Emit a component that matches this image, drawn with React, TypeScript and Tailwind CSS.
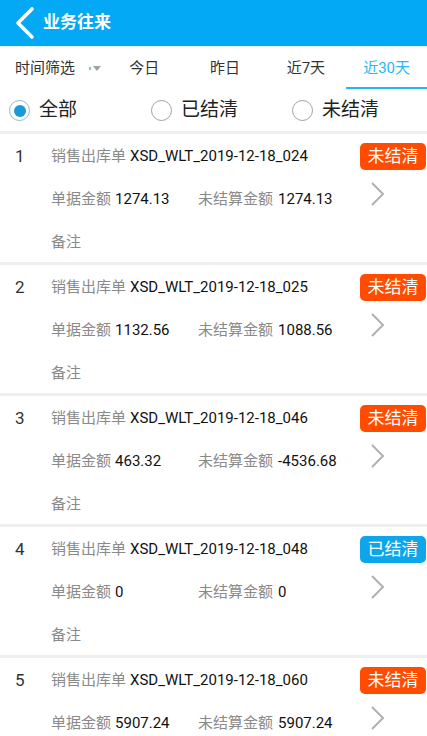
import React from "react";

const rows = [
  { n: 1, code: "XSD_WLT_2019-12-18_024", amt: "1274.13", un: "1274.13", done: false },
  { n: 2, code: "XSD_WLT_2019-12-18_025", amt: "1132.56", un: "1088.56", done: false },
  { n: 3, code: "XSD_WLT_2019-12-18_046", amt: "463.32", un: "-4536.68", done: false },
  { n: 4, code: "XSD_WLT_2019-12-18_048", amt: "0", un: "0", done: true },
  { n: 5, code: "XSD_WLT_2019-12-18_060", amt: "5907.24", un: "5907.24", done: false },
];

function Radio({ on, label }: { on?: boolean; label: string }) {
  return (
    <div className="flex items-center">
      <div
        className={
          (on ? "border-[#8fb8cc] border-[1.5px]" : "border-[#a0a0a0] border") +
          " w-[21px] h-[21px] rounded-full flex items-center justify-center bg-white"
        }
      >
        {on && <div className="w-[12px] h-[12px] rounded-full bg-[#1a9bd7]" />}
      </div>
      <span className="ml-[9px] text-[19px] text-[#222]">{label}</span>
    </div>
  );
}

export default function App() {
  return (
    <div
      className="w-[427px] h-[736px] overflow-hidden bg-white"
      style={{ fontFamily: 'Roboto, "Noto Sans CJK SC", sans-serif' }}
    >
      <div className="h-[46px] bg-[#03a9f4] flex items-center">
        <svg width="24" height="34" viewBox="0 0 24 34" className="ml-[12px]">
          <path d="M20 3 L6 17 L20 31" fill="none" stroke="white" strokeWidth="3.6" strokeLinecap="round" strokeLinejoin="round" />
        </svg>
        <span className="ml-[7px] text-white text-[17px] font-bold">业务往来</span>
      </div>
      <div className="h-[44px] flex border-t border-[#e3f3fb]">
        <div className="w-[104px] flex items-center pl-[15px] text-[15px] text-[#333]">
          <span>时间筛选</span>
          <span className="ml-[14px] w-[2px] h-[3px] bg-[#6cc9f5]" />
          <svg width="8" height="5" viewBox="0 0 8 5" className="ml-[2px]">
            <path d="M0 0 L8 0 L4 5 Z" fill="#a0a0a0" />
          </svg>
        </div>
        {["今日", "昨日", "近7天", "近30天"].map((t, i) => (
          <div key={t} className="flex-1 relative flex items-center justify-center">
            <span className={i === 3 ? "text-[15px] text-[#29b6f6]" : "text-[15px] text-[#333]"}>{t}</span>
            {i === 3 && <div className="absolute left-0 right-0 bottom-[1px] h-[2px] bg-[#29b6f6]" />}
          </div>
        ))}
      </div>
      <div className="h-[41px] flex items-center pl-[9px]">
        <div className="w-[142px]"><Radio on label="全部" /></div>
        <div className="w-[141px]"><Radio label="已结清" /></div>
        <Radio label="未结清" />
      </div>
      {rows.map((r) => (
        <div key={r.n} className="border-t-[3px] border-[#eef0f0] h-[131px] relative">
          <div className="pt-[1px]">
            <div className="h-[43px] flex items-center">
              <span className="w-[51px] pl-[15px] text-[17px] text-[#333]">{r.n}</span>
              <span className="text-[15px] text-[#8a8a8a]">销售出库单</span>
              <span className="ml-[4px] text-[15px] text-[#111]">{r.code}</span>
            </div>
            <div className="h-[43px] flex items-center pl-[51px]">
              <div className="w-[147px] flex items-center">
                <span className="text-[15px] text-[#8a8a8a]">单据金额</span>
                <span className="ml-[4px] text-[15px] text-[#111]">{r.amt}</span>
              </div>
              <span className="text-[15px] text-[#8a8a8a]">未结算金额</span>
              <span className="ml-[5px] text-[15px] text-[#111]">{r.un}</span>
            </div>
            <div className="h-[43px] flex items-center pl-[51px]">
              <span className="text-[15px] text-[#8a8a8a]">备注</span>
            </div>
          </div>
          <div
            className={
              (r.done ? "bg-[#0ea5ea]" : "bg-[#ff4c00]") +
              " absolute right-[1px] top-[9px] w-[66px] h-[27px] rounded-[5px] flex items-center justify-center text-white text-[17px]"
            }
          >
            {r.done ? "已结清" : "未结清"}
          </div>
          <svg width="18" height="26" viewBox="0 0 18 26" className="absolute left-[369px] top-[47px]">
            <path d="M3 2 L14 13 L3 24" fill="none" stroke="#b0b0b0" strokeWidth="2" />
          </svg>
        </div>
      ))}
    </div>
  );
}
